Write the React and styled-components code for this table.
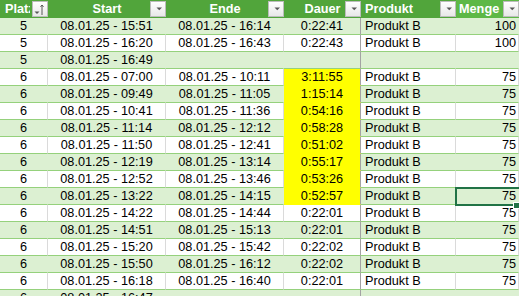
import React from 'react';
import styled, { createGlobalStyle } from 'styled-components';

const COLS = '48px 118px 118px 77px 95px 63px';

const GlobalStyle = createGlobalStyle`
  html, body {
    margin: 0;
    padding: 0;
    background: #fff;
    overflow: hidden;
  }
  body {
    font-family: "Liberation Sans", Arial, sans-serif;
    font-size: 12.7px;
    color: #000;
  }
`;

const Sheet = styled.div`
  width: 519px;
  height: 296px;
  overflow: hidden;
`;

const HeaderRow = styled.div`
  display: grid;
  grid-template-columns: ${COLS};
  height: 18px;
  background: #51a53b;
`;

const HeaderCell = styled.div`
  display: grid;
  height: 18px;
  background: ${p => (p.$active ? '#5db846' : 'transparent')};
  color: #fff;
  font-weight: bold;
  line-height: 18px;
  overflow: hidden;

  & > * {
    grid-area: 1 / 1;
  }
`;

const HeaderLabel = styled.span`
  text-align: ${p => p.$align};
  padding-left: ${p => (p.$align === 'left' ? p.$pad || 4 : 0)}px;
  margin-right: ${p => (p.$clip ? '18px' : '0')};
  overflow: hidden;
  white-space: nowrap;
`;

const FilterButton = styled.div`
  justify-self: end;
  align-self: start;
  margin-top: 1px;
  width: 16px;
  height: 16px;
  box-sizing: border-box;
  border: 1px solid #bcbcbc;
  background: linear-gradient(#ffffff, #e8e8e8);
  display: flex;
  z-index: 1;
`;

const Row = styled.div`
  display: grid;
  grid-template-columns: ${COLS};
  height: 17px;
  background: ${p => (p.$striped ? '#dcf0d2' : '#fff')};
`;

const Cell = styled.div`
  position: relative;
  box-sizing: border-box;
  height: 17px;
  line-height: 16px;
  padding: 0 ${p => (p.$align === 'right' ? '2px' : '4px')};
  text-align: ${p => p.$align};
  white-space: nowrap;
  background: ${p => (p.$yellow ? '#ffff00' : 'transparent')};
  border-bottom: 1px solid ${p => (p.$yellow ? '#ffff00' : '#95d17c')};
  border-right: 1px solid
    ${p => (p.$strong ? '#a3a3a3' : p.$striped ? 'transparent' : '#dadada')};
`;

const Selection = styled.div`
  position: absolute;
  top: -1px;
  left: -1px;
  right: -4px;
  bottom: -2px;
  border: 2px solid #217346;
  z-index: 2;
`;

const FillHandle = styled.div`
  position: absolute;
  right: -1px;
  bottom: -4px;
  width: 5px;
  height: 5px;
  background: #217346;
  box-shadow: 0 0 0 1px #fff;
  z-index: 3;
`;

const DropIcon = () => (
  <svg width="14" height="14" viewBox="0 0 14 14">
    <path d="M5.5 5.5h5.5l-2.75 2.75z" fill="#575757" />
  </svg>
);

const SortIcon = () => (
  <svg width="14" height="14" viewBox="0 0 14 14">
    <path d="M1.5 9.5h5l-2.5 2.5z" fill="#575757" />
    <path d="M9 3v10M7.5 4.8L9 3l1.5 1.8" stroke="#575757" fill="none" strokeWidth="1" />
  </svg>
);

const headers = [
  { label: 'Platz', align: 'left', pad: 5, clip: true, sorted: true },
  { label: 'Start', align: 'center' },
  { label: 'Ende', align: 'center' },
  { label: 'Dauer', align: 'center' },
  { label: 'Produkt', align: 'left', pad: 4 },
  { label: 'Menge', align: 'left', pad: 3, active: true },
];

const d = t => `08.01.25 - ${t}`;

const rows = [
  ['5', '15:51', '16:14', '0:22:41', 'Produkt B', '100'],
  ['5', '16:20', '16:43', '0:22:43', 'Produkt B', '100'],
  ['5', '16:49', '', '', '', ''],
  ['6', '07:00', '10:11', '3:11:55', 'Produkt B', '75', true],
  ['6', '09:49', '11:05', '1:15:14', 'Produkt B', '75', true],
  ['6', '10:41', '11:36', '0:54:16', 'Produkt B', '75', true],
  ['6', '11:14', '12:12', '0:58:28', 'Produkt B', '75', true],
  ['6', '11:50', '12:41', '0:51:02', 'Produkt B', '75', true],
  ['6', '12:19', '13:14', '0:55:17', 'Produkt B', '75', true],
  ['6', '12:52', '13:46', '0:53:26', 'Produkt B', '75', true],
  ['6', '13:22', '14:15', '0:52:57', 'Produkt B', '75', true],
  ['6', '14:22', '14:44', '0:22:01', 'Produkt B', '75'],
  ['6', '14:51', '15:13', '0:22:01', 'Produkt B', '75'],
  ['6', '15:20', '15:42', '0:22:02', 'Produkt B', '75'],
  ['6', '15:50', '16:12', '0:22:02', 'Produkt B', '75'],
  ['6', '16:18', '16:40', '0:22:01', 'Produkt B', '75'],
  ['6', '16:47', '', '', '', ''],
];

const SELECTED_ROW = 10;

export default function App() {
  return (
    <>
      <GlobalStyle />
      <Sheet>
        <HeaderRow>
          {headers.map(h => (
            <HeaderCell key={h.label} $active={h.active}>
              <HeaderLabel $align={h.align} $pad={h.pad} $clip={h.clip}>
                {h.label}
              </HeaderLabel>
              <FilterButton>{h.sorted ? <SortIcon /> : <DropIcon />}</FilterButton>
            </HeaderCell>
          ))}
        </HeaderRow>
        {rows.map((r, i) => {
          const striped = i % 2 === 0;
          const [plat, start, ende, dauer, produkt, menge, yellow] = r;
          return (
            <Row key={i} $striped={striped}>
              <Cell $align="center" $striped={striped}>{plat}</Cell>
              <Cell $align="center" $striped={striped}>{d(start)}</Cell>
              <Cell $align="center" $striped={striped}>{ende && d(ende)}</Cell>
              <Cell $align="center" $striped={striped} $strong $yellow={yellow}>
                {dauer}
              </Cell>
              <Cell $align="left" $striped={striped}>{produkt}</Cell>
              <Cell $align="right" $striped={striped}>
                {menge}
                {i === SELECTED_ROW && (
                  <>
                    <Selection />
                    <FillHandle />
                  </>
                )}
              </Cell>
            </Row>
          );
        })}
      </Sheet>
    </>
  );
}
